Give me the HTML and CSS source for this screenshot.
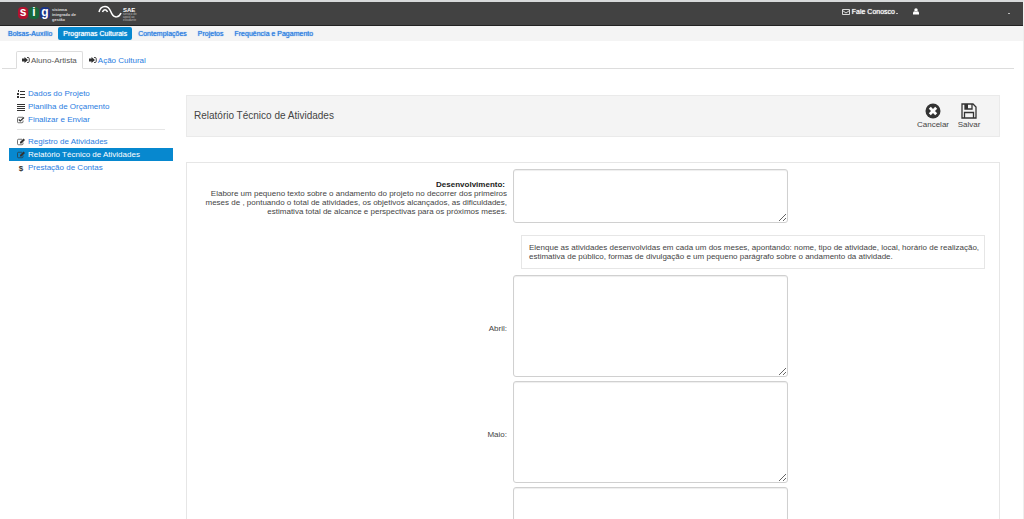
FILE: index.html
```html
<!DOCTYPE html>
<html lang="pt-BR">
<head>
<meta charset="utf-8">
<title>Relatório Técnico de Atividades</title>
<link rel="stylesheet" href="styles.css">
</head>
<body>
<svg class="defs" aria-hidden="true">
  <symbol id="i-enter" viewBox="0 0 16 14"><path fill="currentColor" d="M0 4h5V1l7 6-7 6v-3H0z"/><path fill="none" stroke="currentColor" stroke-width="1.8" d="M10 2h2q2.500 0 2.500 2.500v5q0 2.500-2.500 2.500h-2"/></symbol>
  <symbol id="i-edit" viewBox="0 0 16 14"><path fill="none" stroke="currentColor" stroke-width="1.400" d="M10 1.500H3Q1 1.500 1 3.500v7q0 2 2 2h7q2 0 2-2V8"/><path fill="currentColor" d="M13 0l3 3-7 7H6V7z"/></symbol>
  <symbol id="i-check" viewBox="0 0 16 14"><path fill="none" stroke="currentColor" stroke-width="1.400" d="M12 1.500H3Q1 1.500 1 3.500v7q0 2 2 2h7q2 0 2-2V8"/><path fill="none" stroke="currentColor" stroke-width="2.400" d="M3.500 6l3 3L14 2"/></symbol>
</svg>
<header class="topbar">
  <a class="brand" href="#" aria-label="sig">
    <span class="sig"><b class="s">s</b><b class="i">i</b><b class="g">g</b></span>
    <span class="tagline">sistema<br>integrado de<br>gestão</span>
  </a>
  <a class="sae" href="#">
    <svg class="wave" viewBox="0 0 24 14" aria-hidden="true"><path fill="none" stroke="#fff" stroke-width="1.500" d="M1 7C2 3 4 1.500 7 1.500c5 0 5 4.500 7 7.500 2 4 7 4 9-1"/><path fill="none" stroke="#fff" stroke-width="1.500" d="M4.500 7c1-3 4-3 5 0"/></svg>
    <span class="saetext"><b>SAE</b><small>serviço de<br>apoio ao<br>estudante</small></span>
  </a>
  <nav class="user">
    <a href="#"><svg class="mail" viewBox="0 0 16 12" aria-hidden="true"><path fill="none" stroke="currentColor" stroke-width="1.600" d="M1 1h14v10H1zM1 3l7 5 7-5"/></svg>Fale Conosco<i class="caret"></i></a>
    <a href="#" class="account" aria-label="Conta"><svg class="person" viewBox="0 0 12 14" aria-hidden="true"><circle cx="6" cy="4" r="3.500" fill="currentColor"/><path fill="currentColor" d="M0 13V10q0-3 3-3.500 3 2.500 6 0 3 .5 3 3.500v3z"/></svg><i class="caret"></i></a>
  </nav>
</header>
<nav class="mainnav">
  <a href="#">Bolsas-Auxílio</a><a href="#" class="active">Programas Culturais</a><a href="#">Contemplações</a><a href="#">Projetos</a><a href="#">Frequência e Pagamento</a>
</nav>
<nav class="tabs">
  <a href="#" class="active"><svg class="ico" aria-hidden="true"><use href="#i-enter"/></svg>Aluno-Artista</a>
  <a href="#"><svg class="ico" aria-hidden="true"><use href="#i-enter"/></svg>Ação Cultural</a>
</nav>
<div class="layout">
  <nav class="side">
    <a href="#"><svg class="ico" viewBox="0 0 8 8" aria-hidden="true"><path fill="currentColor" d="M3 1h5v1H3zM3 4h5v1H3zM3 7h5v1H3zM1 0h1v2H1zM0 3h2v2H0zM0 6h2v2H0z"/></svg>Dados do Projeto</a>
    <a href="#"><svg class="ico" viewBox="0 0 8 8" aria-hidden="true"><path fill="currentColor" d="M0 1h8v1H0zM0 3h8v1H0zM0 5h8v1H0zM0 7h8v1H0z"/></svg>Planilha de Orçamento</a>
    <a href="#"><svg class="ico" aria-hidden="true"><use href="#i-check"/></svg>Finalizar e Enviar</a>
    <hr>
    <a href="#"><svg class="ico" aria-hidden="true"><use href="#i-edit"/></svg>Registro de Atividades</a>
    <a href="#" class="active"><svg class="ico" aria-hidden="true"><use href="#i-edit"/></svg>Relatório Técnico de Atividades</a>
    <a href="#"><b class="ico dollar">$</b>Prestação de Contas</a>
  </nav>
  <main class="content">
    <div class="titlebar">
      <h1>Relatório Técnico de Atividades</h1>
      <button type="button"><svg viewBox="0 0 16 16" aria-hidden="true"><circle cx="8" cy="8" r="7.500" fill="currentColor"/><path stroke="#fff" stroke-width="2.800" d="M4.800 4.800l6.400 6.400M11.200 4.800l-6.400 6.400"/></svg>Cancelar</button>
      <button type="button"><svg viewBox="0 0 16 16" aria-hidden="true"><path fill="none" stroke="currentColor" stroke-width="1.300" d="M1 1h11l3 3v11H1zM3.500 15V9.500h9V15M4 1v5h7V1"/><path fill="currentColor" d="M4 1h3v5H4z"/></svg>Salvar</button>
    </div>
    <form class="panel">
      <div class="row">
        <label for="dev"><strong>Desenvolvimento:</strong>Elabore um pequeno texto sobre o andamento do projeto no decorrer dos primeiros<br>meses de , pontuando o total de atividades, os objetivos alcançados, as dificuldades,<br>estimativa total de alcance e perspectivas para os próximos meses.</label>
        <textarea id="dev" class="short"></textarea>
      </div>
      <p class="hint">Elenque as atividades desenvolvidas em cada um dos meses, apontando: nome, tipo de atividade, local, horário de realização,<br>estimativa de público, formas de divulgação e um pequeno parágrafo sobre o andamento da atividade.</p>
      <div class="row"><label for="abr">Abril:</label><textarea id="abr"></textarea></div>
      <div class="row"><label for="mai">Maio:</label><textarea id="mai"></textarea></div>
      <div class="row"><textarea class="next" aria-label="Atividades do mês"></textarea></div>
    </form>
  </main>
</div>
</body>
</html>
```
FILE: styles.css
```css
* { box-sizing: border-box; }
body {
  margin: 0;
  border-top: 2px solid #d8dadb;
  border-right: 1px solid #eee;
  font: 8px/9px "Liberation Sans", Arial, sans-serif;
  color: #444;
  background: #fff;
}
a { color: #2a7de1; text-decoration: none; }
.defs { display: none; }
.ico { width: 8px; height: 8px; flex: none; color: #333; }

.topbar {
  display: flex;
  align-items: flex-start;
  height: 24px;
  padding: 0 13px 0 18px;
  background: #424242;
  border-bottom: 1px solid #222;
}
.topbar a { color: #fff; }
.brand { display: flex; gap: 2px; padding-top: 5px; width: 80px; }
.sig { display: flex; gap: 1px; }
.sig b { width: 10px; height: 12px; border-radius: 4px; text-align: center; font-size: 12px; line-height: 11px; }
.s { background: #b3122e; }
.i { background: #15683a; }
.g { background: #1b3486; }
.tagline { font-size: 4px; line-height: 5px; font-weight: bold; color: #ddd; }
.sae { display: flex; gap: 1px; padding-top: 3px; }
.wave { width: 24px; height: 14px; }
.saetext { display: flex; flex-direction: column; padding-top: 3px; }
.saetext b { font-size: 6px; line-height: 5px; }
.saetext small { font-size: 3px; line-height: 3px; color: #bbb; }
.user { display: flex; margin-left: auto; padding-top: 5px; font-size: 7px; text-shadow: 0 0 1px currentColor; }
.user a { display: flex; align-items: center; }
.mail { width: 8px; height: 6px; margin-right: 2px; }
.person { width: 6px; height: 7px; }
.account { width: 97px; margin-left: 15px; justify-content: space-between; }
.caret { width: 2px; height: 1px; margin: 3px 0 0 1px; background: #bbb; }

.mainnav {
  display: flex;
  align-items: center;
  gap: 1px;
  height: 15px;
  padding-left: 3px;
  background: #f4f4f4;
  font-size: 7px;
  text-shadow: 0 0 1px currentColor;
}
.mainnav a { padding: 2px 5px; }
.mainnav .active { color: #fff; background: #0788cf; border-radius: 2px; }

.tabs { display: flex; margin: 10px 9px 0 2px; padding-left: 14px; border-bottom: 1px solid #ddd; }
.tabs a { display: flex; align-items: center; gap: 1px; height: 18px; padding: 0 5px; border: 1px solid transparent; margin-bottom: -1px; }
.tabs .active { color: #555; background: #fff; border-color: #ddd #ddd #fff; border-radius: 2px 2px 0 0; }

.layout { display: flex; gap: 13px; padding: 18px 23px 0 9px; }
.side { flex: none; width: 164px; }
.side a { display: flex; align-items: center; gap: 3px; height: 13px; padding-left: 8px; }
.side .active { color: #fff; background: #0788cf; }
.side hr { height: 1px; margin: 3px 8px 5px; border: 0; background: #e6e6e6; }
.dollar { text-align: center; }

.content { flex: 1; min-width: 0; padding-top: 8px; }
.titlebar { display: flex; align-items: center; height: 42px; padding: 0 12px 0 7px; background: #f4f4f4; border: 1px solid #eaeaea; }
h1 { flex: 1; margin: 0; font-size: 10px; line-height: 12px; font-weight: normal; }
button { display: flex; flex-direction: column; align-items: center; width: 36px; padding: 0; border: 0; background: none; color: #444; font: inherit; }
button svg { width: 16px; height: 16px; margin-bottom: 1px; color: #333; }

.panel { display: flex; flex-direction: column; gap: 4px; margin-top: 25px; padding: 6px 14px 6px 16px; border: 1px solid #e6e6e6; }
.row { display: grid; grid-template-columns: 304px 275px; gap: 6px; align-items: center; justify-content: start; }
.row label { padding-top: 4px; text-align: right; }
.row strong { display: block; padding-right: 2px; color: #222; }
textarea { display: block; height: 102px; border: 1px solid #d0d0d0; border-radius: 3px; background: #fff; box-shadow: inset 0 1px 1px #eee; }
.short { height: 54px; }
.next { grid-column: 2; }
.hint { margin: 8px 0 2px 318px; padding: 7px 2px 7px 7px; border: 1px solid #e6e6e6; }
```
